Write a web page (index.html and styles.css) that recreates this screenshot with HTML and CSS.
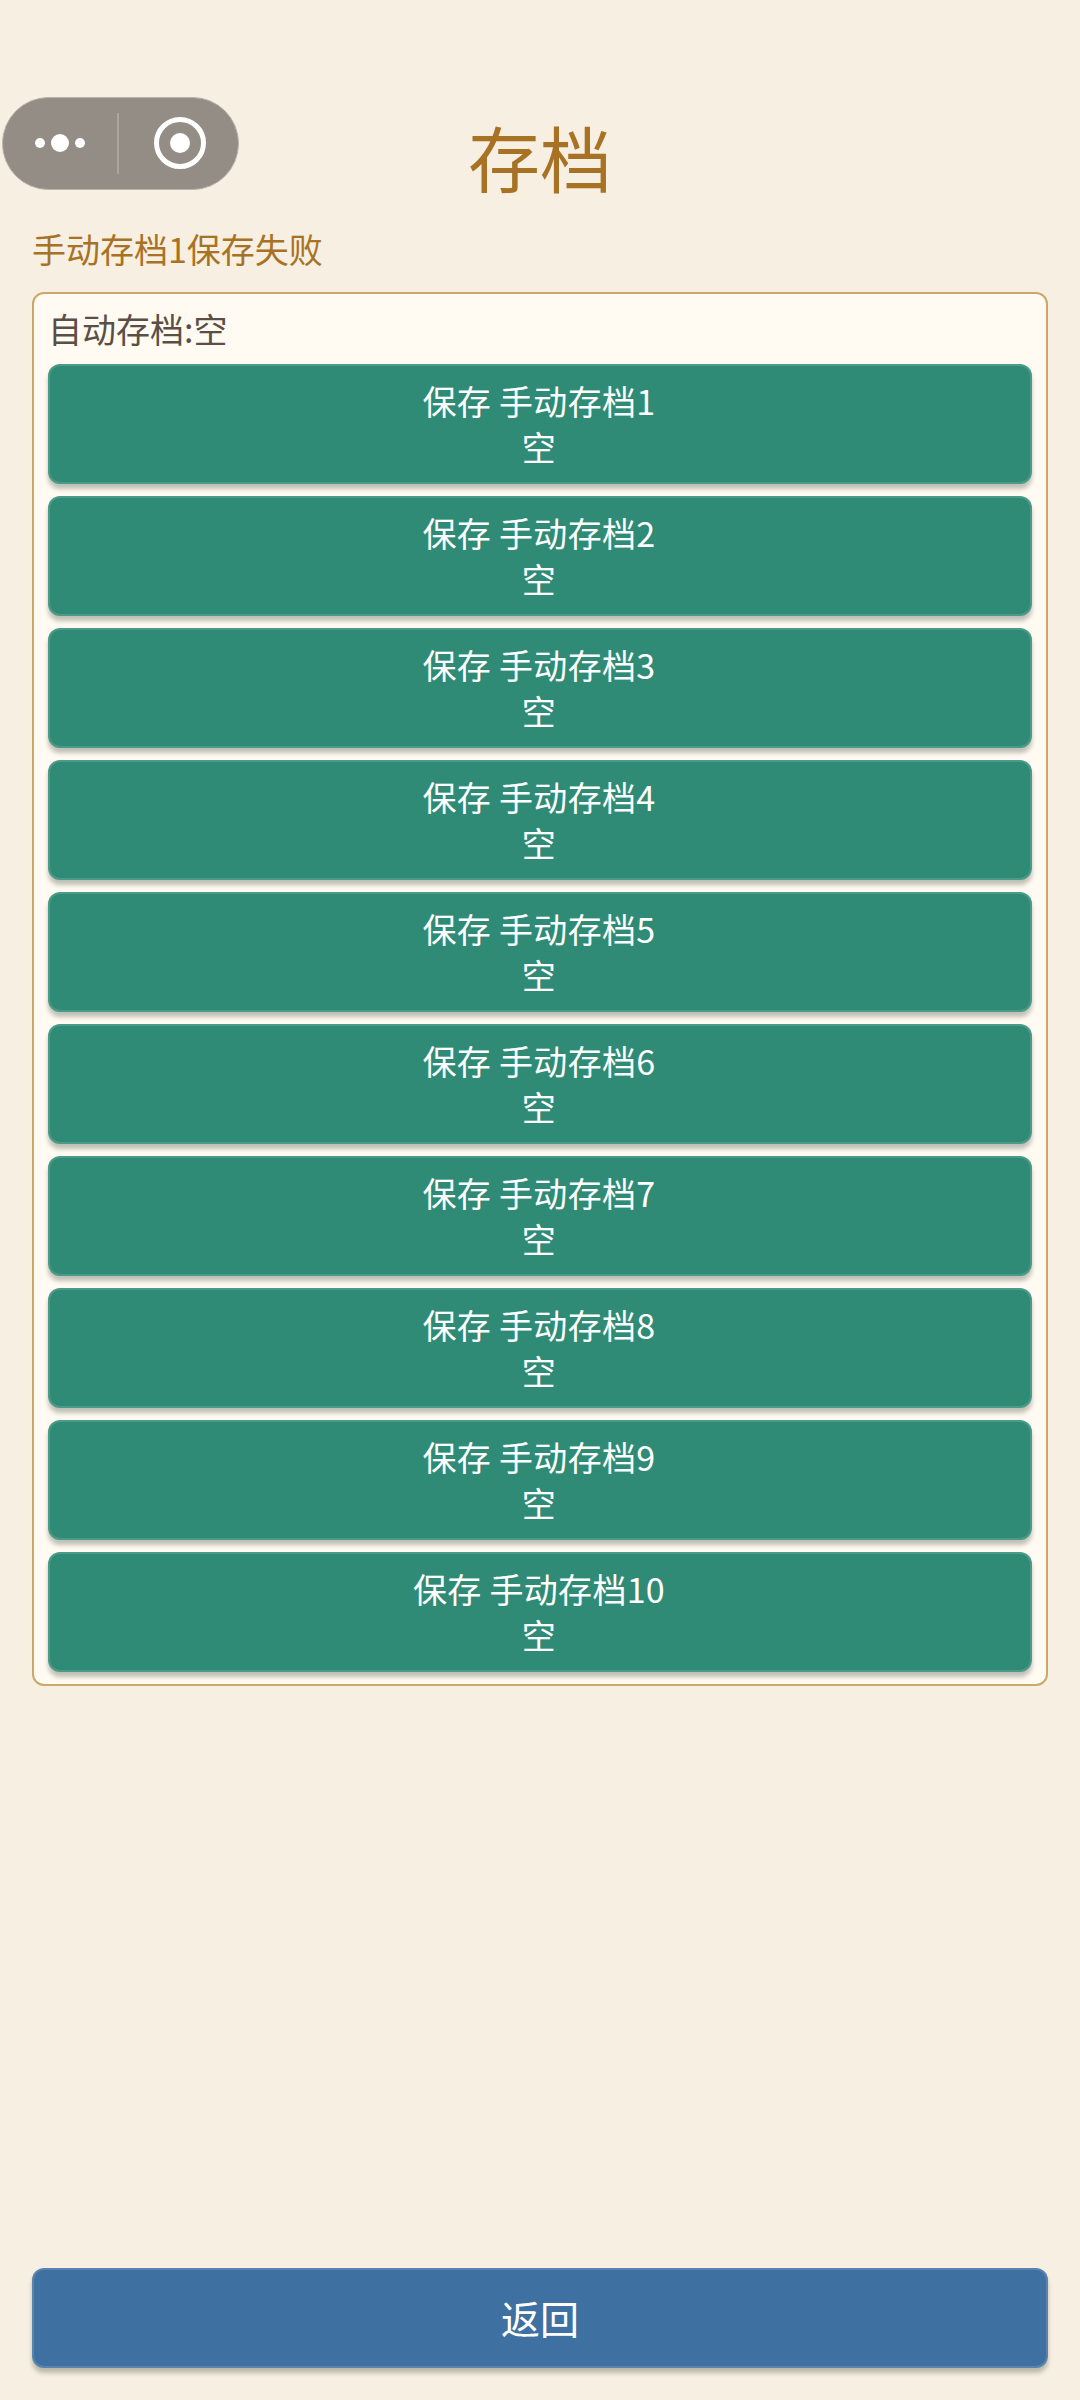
FILE: index.html
```html
<!DOCTYPE html>
<html lang="zh-CN">
<head>
<meta charset="utf-8">
<title>存档</title>
<link rel="stylesheet" href="styles.css">
</head>
<body>
<div class="capsule">
  <svg class="capsule-icon" width="237" height="93" viewBox="0 0 237 93">
    <circle cx="38" cy="46" r="5" fill="#fff"/>
    <circle cx="58" cy="46" r="9" fill="#fff"/>
    <circle cx="78" cy="46" r="5" fill="#fff"/>
    <rect x="115" y="16" width="2" height="61" fill="#aaa59d"/>
    <circle cx="178" cy="46" r="23.5" fill="none" stroke="#fff" stroke-width="5"/>
    <circle cx="178" cy="46" r="10" fill="#fff"/>
  </svg>
</div>
<main class="page">
  <h1 class="title">存档</h1>
  <p class="message">手动存档1保存失败</p>
  <section class="card">
    <p class="auto">自动存档:空</p>
    <div class="slots">
      <button class="slot"><span>保存 手动存档1</span><span>空</span></button>
      <button class="slot"><span>保存 手动存档2</span><span>空</span></button>
      <button class="slot"><span>保存 手动存档3</span><span>空</span></button>
      <button class="slot"><span>保存 手动存档4</span><span>空</span></button>
      <button class="slot"><span>保存 手动存档5</span><span>空</span></button>
      <button class="slot"><span>保存 手动存档6</span><span>空</span></button>
      <button class="slot"><span>保存 手动存档7</span><span>空</span></button>
      <button class="slot"><span>保存 手动存档8</span><span>空</span></button>
      <button class="slot"><span>保存 手动存档9</span><span>空</span></button>
      <button class="slot"><span>保存 手动存档10</span><span>空</span></button>
    </div>
  </section>
  <button class="back">返回</button>
</main>
</body>
</html>
```

FILE: styles.css
```css
* { box-sizing: border-box; }
html, body { margin: 0; padding: 0; }
body {
  width: 1080px;
  height: 2400px;
  background: #f7efe2;
  font-family: "Noto Sans CJK SC", "Noto Sans", sans-serif;
  overflow: hidden;
  position: relative;
}
.capsule {
  position: absolute;
  left: 2px;
  top: 97px;
  width: 237px;
  height: 93px;
  border-radius: 47px;
  background: #938d85;
  border: 1px solid #b9b4ab;
}
.capsule-icon { display: block; margin: -1px; }
.page {
  display: flex;
  flex-direction: column;
  height: 2400px;
  padding: 110px 32px 32px;
}
.title {
  margin: 0;
  font-size: 72px;
  line-height: 92px;
  font-weight: 400;
  color: #a87224;
  text-align: center;
}
.message {
  margin: 24px 0 0;
  font-size: 34px;
  line-height: 46px;
  color: #a87224;
}
.card {
  margin-top: 20px;
  background: #fffaf2;
  border: 2px solid #c9a868;
  border-radius: 12px;
  padding: 14px 14px 12px;
}
.auto {
  margin: -2px 0 12px 0;
  font-size: 34px;
  line-height: 46px;
  color: #5a4f44;
}
.slots { display: flex; flex-direction: column; gap: 12px; }
.slot, .back {
  display: flex;
  flex-direction: column;
  align-items: center;
  justify-content: center;
  width: 100%;
  color: #fff;
  font-family: inherit;
  border-radius: 12px;
  border: 2px solid rgba(255, 255, 255, 0.14);
  box-shadow: 0 5px 4px rgba(60, 70, 60, 0.32);
}
.slot {
  height: 120px;
  padding: 0 2px 0 0;
  background-color: #2f8b75;
  font-size: 34px;
  line-height: 46px;
  letter-spacing: 0.3px;
}
.back {
  margin-top: auto;
  height: 100px;
  padding: 0 0 2px;
  background-color: #3f70a2;
  font-size: 39px;
}
```
